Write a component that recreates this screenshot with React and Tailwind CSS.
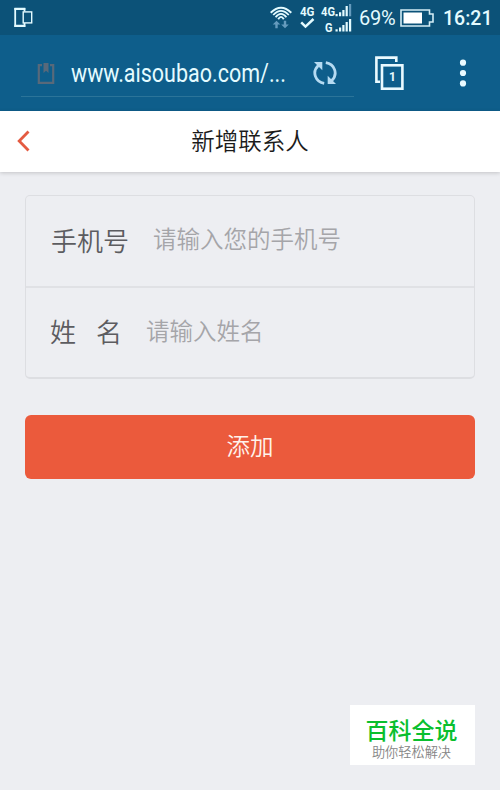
import { useState } from 'react';

function PhoneIcon() {
  return (
    <svg width="20" height="22" viewBox="0 0 20 22" fill="none" stroke="#e4fbff">
      <path d="M11.5 4.5V2H2.2v17h9.3v-3" strokeWidth="1.8" />
      <path d="M1.4 1.900h10.9M1.4 18.900h10.9" strokeWidth="2.400" />
      <rect x="10.2" y="4.9" width="8.5" height="11" strokeWidth="1.4" />
    </svg>
  );
}

function WifiIcon() {
  return (
    <svg width="24" height="24" viewBox="0 0 24 24" fill="none" stroke="#e4fbff">
      <path d="M.7 6.8Q11 -3.200 21.3 6.8" strokeWidth="1.9" />
      <path d="M3.2 9Q11 .6 18.8 9" strokeWidth="1.8" />
      <path d="M5.6 11.200Q11 4.400 16.4 11.200" strokeWidth="1.800" />
      <path d="M8.200 13.200Q11 8.600 13.800 13.200" strokeWidth="1.900" />
      <path d="M6.500 14.800L2.700 18.600h2.600v3.600h2.400v-3.600h2.600z" fill="#659bbd" stroke="none" />
      <path d="M15 22.200l3.800-3.800h-2.600v-3.600h-2.400v3.600h-2.600z" fill="#659bbd" stroke="none" />
    </svg>
  );
}

function SignalIcons() {
  return (
    <svg width="54" height="31" viewBox="0 0 54 31" fill="#e4fbff" className="font-['Roboto',sans-serif] font-bold">
      <text x="0" y="12" fontSize="12.5" textLength="14.5" lengthAdjust="spacingAndGlyphs">4G</text>
      <path d="M1.2 18.300l4.300 4.300L13.500 15" fill="none" stroke="#e4fbff" strokeWidth="2.500" />
      <text x="21" y="12" fontSize="12.5" textLength="14" lengthAdjust="spacingAndGlyphs">4G</text>
      <path d="M35.500 10h2.200v2.300h-2.200zM39 8.300h2.200v4H39zM42.300 6h2.200v6.300h-2.200zM45.600 2h2.200v10.300h-2.200z" />
      <path d="M49 0h2.200v12.300H49z" fill="#659bbd" />
      <text x="25" y="27.5" fontSize="12.5" textLength="7.5" lengthAdjust="spacingAndGlyphs">G</text>
      <path d="M35.500 25.200h2.200v2.300h-2.200zM39 23.500h2.200v4H39zM42.300 21h2.200v6.500h-2.200zM45.600 18h2.200v9.500h-2.200zM49 15h2.200v12.500H49z" />
    </svg>
  );
}

function BatteryIcon() {
  return (
    <svg width="34" height="18" viewBox="0 0 34 18">
      <path d="M1 1h28.500v4h3.500v8h-3.500v4H1z" fill="none" stroke="#d3edf5" strokeWidth="1.600" />
      <path d="M3.500 3.500H22v11H3.500z" fill="#fff" />
    </svg>
  );
}

function BookmarkIcon() {
  return (
    <svg width="18" height="23" viewBox="0 0 18 23">
      <path d="M5 3.200H1.800v17.600h14.400V3.200h-3.200" fill="none" stroke="#58697a" strokeWidth="2.200" />
      <path d="M6.500 1h5v10L9 8.700 6.500 11z" fill="#58697a" />
    </svg>
  );
}

function ReloadIcon() {
  return (
    <svg width="26" height="26" viewBox="0 0 26 26" fill="none" stroke="#b5dbf2" strokeWidth="2.800">
      <path d="M12.200 23.300C3.500 22 -.5 12 6.300 5.500" />
      <path d="M13.800 2.700c8.700 1.300 12.700 11.300 5.900 17.800" />
      <path d="M2 2h8.300v8.300z" fill="#b5dbf2" stroke="none" />
      <path d="M24 24h-8.300v-8.300z" fill="#b5dbf2" stroke="none" />
    </svg>
  );
}

function TabsButton() {
  return (
    <button className="relative h-[35px] w-[29px] shrink-0">
      <svg width="29" height="35" viewBox="0 0 29 35" fill="none" stroke="#eafaff" strokeWidth="2.600">
        <path d="M21.300 6V1.600H1.400v24.200h3.600" />
        <rect x="7" y="9.300" width="20.400" height="23.400" />
      </svg>
      <span className="absolute top-[9px] left-[6px] w-[23px] text-center font-['Roboto',sans-serif] text-[12px]/[25px] font-bold text-[#eafaff]">1</span>
    </button>
  );
}

function StatusBar() {
  return (
    <div className="flex h-[35px] items-center bg-[#0c5278] pl-[13px] text-[#e4fbff]">
      <PhoneIcon />
      <div className="ml-[237px] flex h-full items-start pt-[4px]">
        <div className="pt-[2px]"><WifiIcon /></div>
        <div className="ml-[6px]"><SignalIcons /></div>
      </div>
      <span className="ml-[5px] w-[37px] pt-[1px] text-[20px] tracking-[-0.2px]">69%</span>
      <div className="ml-[4px]"><BatteryIcon /></div>
      <span className="ml-[9px] pt-[2px] text-[19.5px] font-medium">16:21</span>
    </div>
  );
}

function BrowserBar() {
  return (
    <div className="flex h-[76px] items-start bg-[#0e5e8b] pl-[21px]">
      <div className="flex h-[62px] w-[333px] shrink-0 items-center border-b border-[#2b7499] pt-[15px] pl-[16px]">
        <BookmarkIcon />
        <span className="ml-[16px] w-[216px] pt-[2px] text-[25px] whitespace-nowrap text-[#e4fbff]">
          <span className="inline-block origin-left scale-x-[0.86]">www.aisoubao.com/...</span>
        </span>
        <button className="ml-[25px]"><ReloadIcon /></button>
      </div>
      <div className="mt-[21px] ml-[21px] flex items-start">
        <TabsButton />
        <button className="mt-[3px] ml-[55px]">
          <svg width="8" height="28" viewBox="0 0 8 28" fill="#eafaff">
            <circle cx="4" cy="3.7" r="3.1" />
            <circle cx="4" cy="14" r="3.1" />
            <circle cx="4" cy="24.4" r="3.1" />
          </svg>
        </button>
      </div>
    </div>
  );
}

export default function App() {
  const [phone, setPhone] = useState('');
  const [name, setName] = useState('');

  return (
    <div className="flex h-[790px] w-[500px] flex-col overflow-hidden bg-[#edeef2] font-['Noto_Sans_CJK_SC',sans-serif] font-[350]">
      <div className="font-['Roboto',sans-serif] font-normal">
        <StatusBar />
        <BrowserBar />
      </div>

      <header className="flex h-[61px] shrink-0 items-center bg-white pb-[2px] pl-[17px] shadow-[0_1px_4px_rgba(0,0,0,0.18)]">
        <svg width="13" height="22" viewBox="0 0 13 22" fill="none" stroke="#e45b42" strokeWidth="2.800">
          <path d="M11.500 1.500L2.200 11l9.300 9.500" />
        </svg>
        <h1 className="flex-1 pr-[30px] text-center text-[23.5px] text-[#1b1b1b]">新增联系人</h1>
      </header>

      <main className="flex flex-col px-[25px] pt-[23px]">
        <div className="rounded-[5px] border border-b-2 border-[#dddee2] text-[#5c5c60]">
          <label className="flex h-[92px] items-center border-b-2 border-[#e0e1e5] pb-[4px] pl-[25px]">
            <span className="w-[102px] text-[26px]">手机号</span>
            <input
              className="w-[300px] bg-transparent text-[23.5px] outline-none placeholder:text-[#a5a5a9]"
              placeholder="请输入您的手机号"
              value={phone}
              onChange={(e) => setPhone(e.target.value)}
            />
          </label>
          <label className="flex h-[89px] items-center pb-[4px] pl-[24px]">
            <span className="flex w-[72px] justify-between text-[26px]"><span>姓</span><span>名</span></span>
            <input
              className="ml-[24px] w-[300px] bg-transparent text-[23.5px] outline-none placeholder:text-[#a5a5a9]"
              placeholder="请输入姓名"
              value={name}
              onChange={(e) => setName(e.target.value)}
            />
          </label>
        </div>

        <button className="mt-[36px] h-[64px] rounded-[6px] bg-[#eb5a3c] pb-[2px] text-[23.5px] text-[#fff3ec]">添加</button>
      </main>

      <div className="mt-auto mr-[25px] mb-[25px] flex h-[60px] w-[125px] flex-col items-center self-end bg-white pt-[10px] pr-[2px]">
        <span className="text-[23px]/[29px] font-medium text-[#0abf2e]">百科全说</span>
        <span className="text-[13.2px]/[15px] text-[#858585]">助你轻松解决</span>
      </div>
    </div>
  );
}
